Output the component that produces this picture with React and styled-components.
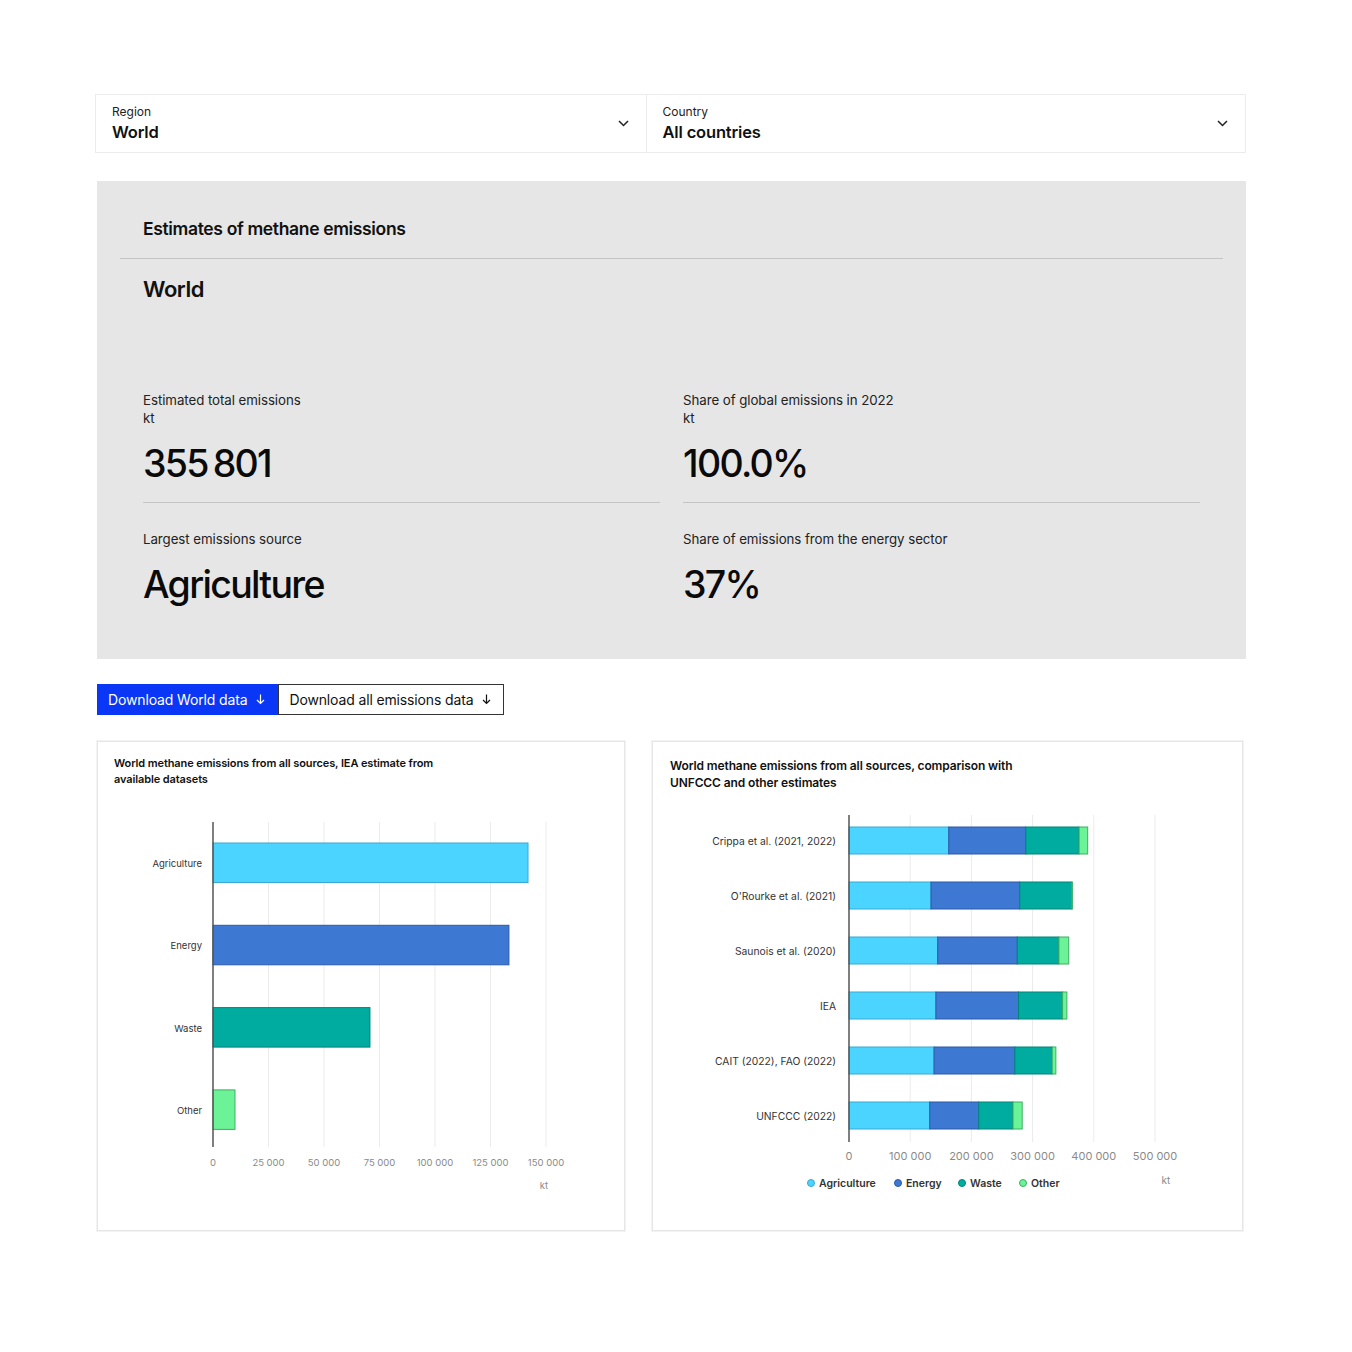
import React from "react";
import styled, { createGlobalStyle } from "styled-components";

const GlobalStyle = createGlobalStyle`
  body {
    margin: 0;
    background: #ffffff;
    font-family: Inter, "Noto Sans", "Liberation Sans", sans-serif;
    color: #111;
  }
`;

const COLORS = {
  Agriculture: { fill: "#4bd4ff", stroke: "#3aa9d0" },
  Energy: { fill: "#3d79d3", stroke: "#2c59a8" },
  Waste: { fill: "#00ab9f", stroke: "#00857b" },
  Other: { fill: "#6cf297", stroke: "#3fae62" },
};

const worldSources = [
  { name: "Agriculture", value: 141900 },
  { name: "Energy", value: 133300 },
  { name: "Waste", value: 70700 },
  { name: "Other", value: 9900 },
];

const comparison = [
  { name: "Crippa et al. (2021, 2022)", values: [163000, 126000, 87000, 14000] },
  { name: "O'Rourke et al. (2021)", values: [134000, 145000, 85000, 1000] },
  { name: "Saunois et al. (2020)", values: [145000, 130000, 68000, 16000] },
  { name: "IEA", values: [142000, 135000, 72000, 7000] },
  { name: "CAIT (2022), FAO (2022)", values: [139000, 132000, 61000, 6000] },
  { name: "UNFCCC (2022)", values: [132000, 80000, 56000, 15000] },
];

const fmt = (n) => (n === 0 ? "0" : n.toLocaleString("en-US").replace(/,/g, " "));

export default function App() {
  return (
    <>
      <GlobalStyle />
      <Page>
        <SelectBar>
          <SelectCell $width={550}>
            <SelectText>
              <SelectLabel>Region</SelectLabel>
              <SelectValue>World</SelectValue>
            </SelectText>
            <Chevron />
          </SelectCell>
          <SelectCell $width={600} $divider>
            <SelectText>
              <SelectLabel>Country</SelectLabel>
              <SelectValue>All countries</SelectValue>
            </SelectText>
            <Chevron />
          </SelectCell>
        </SelectBar>

        <Summary>
          <SummaryTitle>Estimates of methane emissions</SummaryTitle>
          <Rule />
          <RegionName>World</RegionName>
          <StatsGrid>
            <Stat $ruled>
              <StatLabel>
                Estimated total emissions
                <br />
                kt
              </StatLabel>
              <StatValue>355{"\u2009"}801</StatValue>
            </Stat>
            <Stat $ruled>
              <StatLabel>
                Share of global emissions in 2022
                <br />
                kt
              </StatLabel>
              <StatValue>100.0%</StatValue>
            </Stat>
            <Stat>
              <StatLabel>Largest emissions source</StatLabel>
              <StatValue>Agriculture</StatValue>
            </Stat>
            <Stat>
              <StatLabel>Share of emissions from the energy sector</StatLabel>
              <StatValue>37%</StatValue>
            </Stat>
          </StatsGrid>
        </Summary>

        <Buttons>
          <DownloadButton $primary>
            Download World data <DownArrow />
          </DownloadButton>
          <DownloadButton>
            Download all emissions data <DownArrow />
          </DownloadButton>
        </Buttons>

        <Charts>
          <ChartCard $width={528}>
            <ChartTitle $size={11}>
              World methane emissions from all sources, IEA estimate from
              <br />
              available datasets
            </ChartTitle>
            <SourcesChart />
          </ChartCard>
          <ChartCard $width={591}>
            <ChartTitle $size={12} $pad={17} $top={15}>
              World methane emissions from all sources, comparison with
              <br />
              UNFCCC and other estimates
            </ChartTitle>
            <ComparisonChart />
          </ChartCard>
        </Charts>
      </Page>
    </>
  );
}

function Chevron() {
  return (
    <svg width="11" height="7" viewBox="0 0 11 7" fill="none">
      <path d="M1 1l4.5 4.5L10 1" stroke="#222" strokeWidth="1.5" />
    </svg>
  );
}

function DownArrow() {
  return (
    <svg width="9" height="11" viewBox="0 0 9 11" fill="none">
      <path d="M4.5 0.5v9M1 6l3.5 3.5L8 6" stroke="currentColor" strokeWidth="1.2" />
    </svg>
  );
}

function SourcesChart() {
  const x0 = 115;
  const per = 55.5 / 25000;
  const ticks = [0, 25000, 50000, 75000, 100000, 125000, 150000];
  return (
    <svg width="526" height="438" viewBox="0 0 526 438">
      {ticks.slice(1).map((t) => (
        <line key={t} x1={x0 + t * per} x2={x0 + t * per} y1="31" y2="356" stroke="#ebebeb" strokeWidth="1" />
      ))}
      {worldSources.map((s, i) => {
        const y = 52 + i * 82.3;
        return (
          <g key={s.name}>
            <rect
              x={x0}
              y={y}
              width={s.value * per}
              height="39.5"
              fill={COLORS[s.name].fill}
              stroke={COLORS[s.name].stroke}
              strokeWidth="1"
            />
            <text x="104" y={y + 24} textAnchor="end" fontSize="9.5" fill="#333" fontFamily="Inter, sans-serif">
              {s.name}
            </text>
          </g>
        );
      })}
      <line x1={x0} x2={x0} y1="31" y2="356" stroke="#555" strokeWidth="1.5" />
      {ticks.map((t) => (
        <text key={t} x={x0 + t * per} y="375" textAnchor="middle" fontSize="9.5" fill="#8a8a8a" fontFamily="Inter, sans-serif">
          {fmt(t)}
        </text>
      ))}
      <text x="446" y="398" textAnchor="middle" fontSize="9.5" fill="#8a8a8a" fontFamily="Inter, sans-serif">
        kt
      </text>
    </svg>
  );
}

function ComparisonChart() {
  const x0 = 196;
  const per = 61.2 / 100000;
  const ticks = [0, 100000, 200000, 300000, 400000, 500000];
  const names = ["Agriculture", "Energy", "Waste", "Other"];
  const legend = [
    { name: "Agriculture", x: 158 },
    { name: "Energy", x: 245 },
    { name: "Waste", x: 309 },
    { name: "Other", x: 370 },
  ];
  return (
    <svg width="589" height="438" viewBox="0 0 589 438">
      {ticks.slice(1).map((t) => (
        <line key={t} x1={x0 + t * per} x2={x0 + t * per} y1="24" y2="351" stroke="#ebebeb" strokeWidth="1" />
      ))}
      {comparison.map((row, i) => {
        const y = 36 + i * 55;
        let acc = 0;
        return (
          <g key={row.name}>
            {row.values.map((v, j) => {
              const x = x0 + acc * per;
              acc += v;
              const c = COLORS[names[j]];
              return (
                <rect key={j} x={x} y={y} width={v * per} height="27" fill={c.fill} stroke={c.stroke} strokeWidth="1" />
              );
            })}
            <text x="183" y={y + 18} textAnchor="end" fontSize="10.3" fill="#333" fontFamily="Inter, sans-serif">
              {row.name}
            </text>
          </g>
        );
      })}
      <line x1={x0} x2={x0} y1="24" y2="351" stroke="#555" strokeWidth="1.5" />
      {ticks.map((t) => (
        <text key={t} x={x0 + t * per} y="369" textAnchor="middle" fontSize="11" fill="#8a8a8a" fontFamily="Inter, sans-serif">
          {fmt(t)}
        </text>
      ))}
      <text x="513" y="393" textAnchor="middle" fontSize="10" fill="#8a8a8a" fontFamily="Inter, sans-serif">
        kt
      </text>
      {legend.map((l) => (
        <g key={l.name}>
          <circle cx={l.x} cy="392" r="3.5" fill={COLORS[l.name].fill} stroke={COLORS[l.name].stroke} strokeWidth="1" />
          <text x={l.x + 8} y="396" fontSize="10.5" fontWeight="600" fill="#333" fontFamily="Inter, sans-serif">
            {l.name}
          </text>
        </g>
      ))}
    </svg>
  );
}

const Page = styled.div`
  width: 1150px;
  margin: 0 0 0 96px;
  padding: 94px 0 120px;
`;

const SelectBar = styled.div`
  display: flex;
  height: 59px;
  box-sizing: border-box;
  border: 1px solid #ececec;
  margin-left: -1px;
`;

const SelectCell = styled.div`
  width: ${(p) => p.$width}px;
  box-sizing: border-box;
  display: flex;
  align-items: center;
  justify-content: space-between;
  padding: 0 17px 0 16px;
  border-left: ${(p) => (p.$divider ? "1px solid #ececec" : "none")};
`;

const SelectText = styled.div`
  display: flex;
  flex-direction: column;
`;

const SelectLabel = styled.span`
  font-size: 12px;
  line-height: 16px;
  color: #222;
`;

const SelectValue = styled.span`
  margin-top: 1px;
  font-size: 16.5px;
  line-height: 22px;
  font-weight: 600;
  letter-spacing: -0.01em;
  color: #111;
`;

const Summary = styled.section`
  margin-top: 28px;
  height: 478px;
  box-sizing: border-box;
  background: #e6e6e6;
  padding: 36px 23px 0 23px;
  margin-left: 1px;
`;

const SummaryTitle = styled.h2`
  margin: 0 0 0 23px;
  font-size: 17.5px;
  line-height: 24px;
  font-weight: 600;
  letter-spacing: -0.02em;
`;

const Rule = styled.hr`
  margin: 17px 0 0;
  border: none;
  border-top: 1.5px solid #c4c4c4;
`;

const RegionName = styled.h3`
  margin: 16px 0 0 23px;
  font-size: 22px;
  line-height: 28px;
  font-weight: 600;
  letter-spacing: -0.02em;
`;

const StatsGrid = styled.div`
  display: grid;
  grid-template-columns: 517px 517px;
  column-gap: 23px;
  margin: 88px 0 0 23px;
`;

const Stat = styled.div`
  padding-bottom: ${(p) => (p.$ruled ? "15px" : "0")};
  margin-bottom: ${(p) => (p.$ruled ? "27px" : "0")};
  border-bottom: ${(p) => (p.$ruled ? "1.5px solid #c4c4c4" : "none")};
`;

const StatLabel = styled.div`
  font-size: 13.3px;
  line-height: 18px;
  letter-spacing: -0.005em;
  color: #222;
`;

const StatValue = styled.div`
  margin-top: 14px;
  font-size: 37.5px;
  line-height: 46px;
  font-weight: 500;
  letter-spacing: -0.045em;
  color: #0a0a0a;
`;

const Buttons = styled.div`
  display: flex;
  margin: 25px 0 0 1px;
`;

const DownloadButton = styled.button`
  display: inline-flex;
  align-items: center;
  gap: 9px;
  height: 31px;
  box-sizing: border-box;
  padding: 0 12px 0 10px;
  font-family: Inter, "Noto Sans", sans-serif;
  font-size: 14px;
  letter-spacing: -0.01em;
  cursor: pointer;
  background: ${(p) => (p.$primary ? "#0a37f5" : "#ffffff")};
  color: ${(p) => (p.$primary ? "#ffffff" : "#111")};
  border: 1px solid ${(p) => (p.$primary ? "#0a37f5" : "#333")};
`;

const Charts = styled.div`
  display: flex;
  gap: 27px;
  margin: 26px 0 0 1px;
`;

const ChartCard = styled.div`
  width: ${(p) => p.$width}px;
  height: 490px;
  box-sizing: border-box;
  border: 1px solid #e6e6e6;
  box-shadow: 0 0 0 1px #f3f3f3;
`;

const ChartTitle = styled.div`
  height: 49px;
  box-sizing: border-box;
  padding: ${(p) => p.$top || 13}px ${(p) => p.$pad || 16}px 0;
  font-size: ${(p) => p.$size}px;
  line-height: ${(p) => p.$size + 5}px;
  font-weight: 600;
  letter-spacing: -0.01em;
  color: #111;
`;
